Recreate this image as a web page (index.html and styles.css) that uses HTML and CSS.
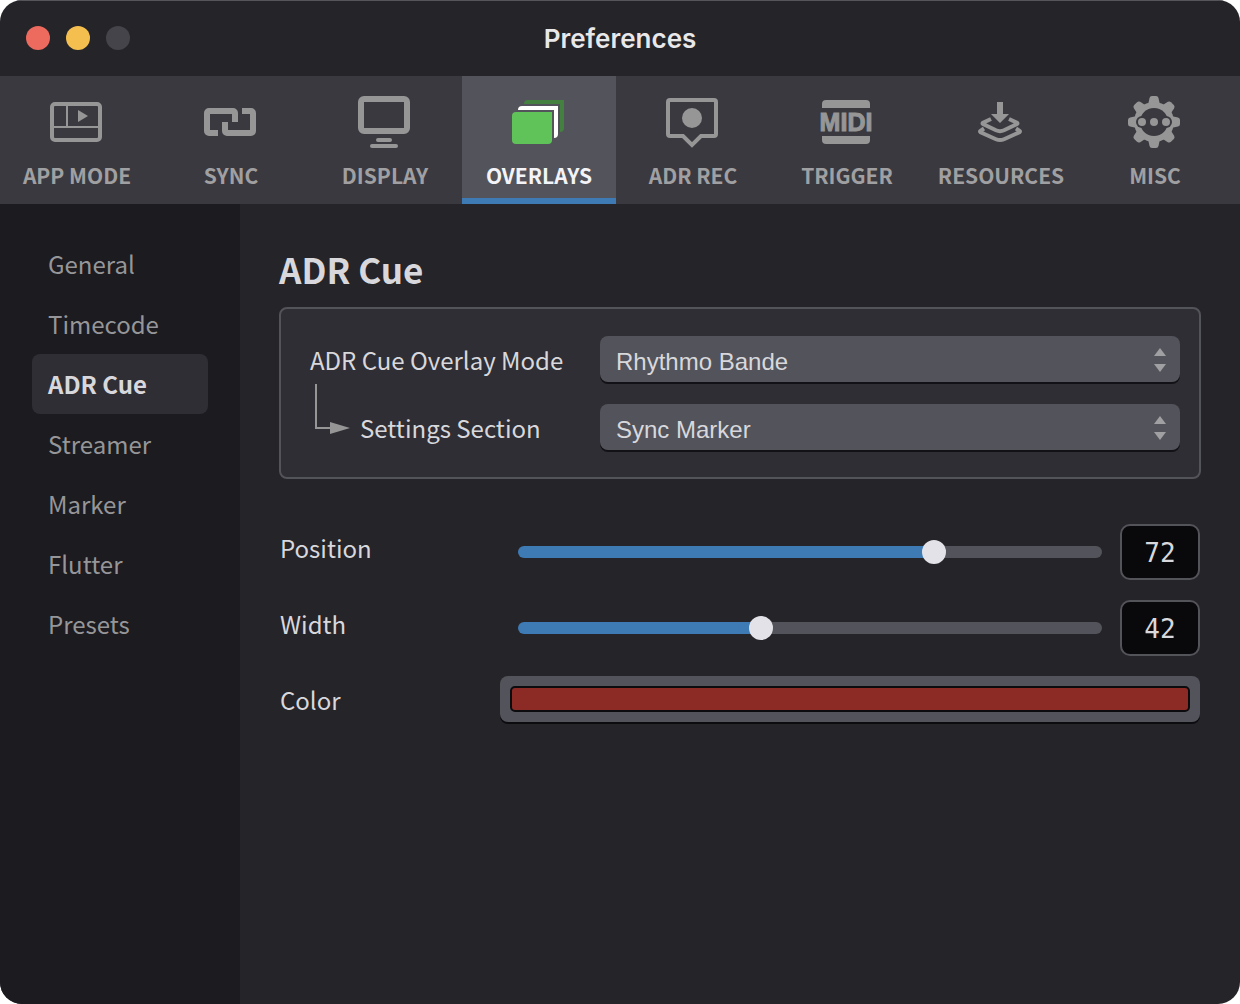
FILE: index.html
```html
<!DOCTYPE html>
<html lang="en">
<head>
<meta charset="UTF-8" />
<meta name="viewport" content="width=device-width, initial-scale=1" />
<title>Preferences</title>
<link rel="stylesheet" href="styles.css">
</head>
<body>

<div class="window">

  <header class="titlebar">
    <div class="traffic">
      <button type="button" class="dot close" aria-label="Close"></button>
      <button type="button" class="dot minimize" aria-label="Minimize"></button>
      <button type="button" class="dot zoom" aria-label="Zoom" disabled></button>
    </div>
    <h1>Preferences</h1>
  </header>

  <!-- Toolbar -->
  <nav class="toolbar">
    <button type="button" class="tab">
      <svg width="54" height="54" viewBox="0 0 54 54" fill="none" stroke="currentColor">
        <rect x="2" y="8" width="48" height="36" rx="3" stroke-width="4" />
        <path d="M17 9V31M3 31H49" stroke-width="2" />
        <path d="M28 14L38 20L28 26Z" fill="currentColor" stroke="none" />
      </svg>
      APP MODE
    </button>
    <button type="button" class="tab">
      <svg width="54" height="54" viewBox="0 0 54 54" fill="none" stroke="currentColor" stroke-width="6">
        <path d="M14 37H5a2 2 0 0 1-2-2V17a2 2 0 0 1 2-2H29a2 2 0 0 1 2 2V26" />
        <path d="M38 15H47a2 2 0 0 1 2 2V35a2 2 0 0 1-2 2H23a2 2 0 0 1-2-2V26" />
      </svg>
      SYNC
    </button>
    <button type="button" class="tab">
      <svg width="54" height="54" viewBox="0 0 54 54" fill="currentColor">
        <rect x="3" y="3" width="46" height="32" rx="3" fill="none" stroke="currentColor" stroke-width="6" />
        <rect x="18" y="42" width="16" height="4" rx="2" />
        <rect x="12" y="48" width="28" height="4" rx="2" />
      </svg>
      DISPLAY
    </button>
    <button type="button" class="tab active">
      <svg width="54" height="54" viewBox="0 0 54 54">
        <path d="M12 8q0-4 4-4H52V32q0 4-4 4V8Z" fill="#44803f" />
        <path d="M6 14q0-4 4-4H46V38q0 4-4 4V14Z" fill="#fff" />
        <path d="M4 16H40V44a4 4 0 0 1-4 4H4a4 4 0 0 1-4-4V20a4 4 0 0 1 4-4Z" fill="#5fc35a" />
      </svg>
      OVERLAYS
    </button>
    <button type="button" class="tab">
      <svg width="54" height="54" viewBox="0 0 54 54" fill="none" stroke="currentColor" stroke-width="4">
        <path d="M4 4H48a2 2 0 0 1 2 2V38a2 2 0 0 1-2 2H35L26 49L17 40H4a2 2 0 0 1-2-2V6a2 2 0 0 1 2-2Z" />
        <circle cx="26" cy="22" r="10" fill="currentColor" stroke="none" />
      </svg>
      ADR REC
    </button>
    <button type="button" class="tab">
      <svg width="54" height="54" viewBox="0 0 54 54" fill="currentColor">
        <path d="M2 12V8a4 4 0 0 1 4-4H46a4 4 0 0 1 4 4V12Z" />
        <text class="midi" x="26" y="35" text-anchor="middle">MIDI</text>
        <path d="M2 40H50V44a4 4 0 0 1-4 4H6a4 4 0 0 1-4-4Z" />
      </svg>
      TRIGGER
    </button>
    <button type="button" class="tab">
      <svg width="54" height="54" viewBox="0 0 54 54" fill="none" stroke="currentColor" stroke-width="4">
        <path d="M17 23L9 26.8q-1 .6 0 1.2L22 34.3q4 1.8 8 0L43 28q1-.6 0-1.2L35 23" />
        <path d="M10 32.5L6.5 34.8q-1 .8 0 1.4L22 43.2q4 1.8 8 0L45.5 36.2q1-.6 0-1.4L42 32.5" />
        <path d="M23 6H29V18H35L26 27L17 18H23Z" fill="currentColor" stroke="none" />
      </svg>
      RESOURCES
    </button>
    <button type="button" class="tab">
      <svg width="54" height="54" viewBox="0 0 54 54" fill="currentColor">
        <defs>
          <path id="tooth" d="M20 9L21.5 2Q22 0 24 0H28Q30 0 30.5 2L32 9Z" />
        </defs>
        <circle cx="26" cy="26" r="20" />
        <use href="#tooth" />
        <use href="#tooth" transform="rotate(45 26 26)" />
        <use href="#tooth" transform="rotate(90 26 26)" />
        <use href="#tooth" transform="rotate(135 26 26)" />
        <use href="#tooth" transform="rotate(180 26 26)" />
        <use href="#tooth" transform="rotate(225 26 26)" />
        <use href="#tooth" transform="rotate(270 26 26)" />
        <use href="#tooth" transform="rotate(315 26 26)" />
        <g class="gear-hole">
          <circle cx="26" cy="26" r="14" />
          <circle cx="14" cy="26" r="6" />
          <circle cx="38" cy="26" r="6" />
        </g>
        <circle cx="14" cy="26" r="4" />
        <circle cx="26" cy="26" r="4" />
        <circle cx="38" cy="26" r="4" />
      </svg>
      MISC
    </button>
  </nav>

  <div class="content">

    <nav class="sidebar">
      <a href="#general">General</a>
      <a href="#timecode">Timecode</a>
      <a href="#adr-cue" class="active">ADR Cue</a>
      <a href="#streamer">Streamer</a>
      <a href="#marker">Marker</a>
      <a href="#flutter">Flutter</a>
      <a href="#presets">Presets</a>
    </nav>

    <main class="main">
      <h2>ADR Cue</h2>

      <section class="panel">
        <label for="overlayMode">ADR Cue Overlay Mode</label>
        <div class="select">
          <select id="overlayMode">
            <option>Rhythmo Bande</option>
          </select>
          <svg width="12" height="26" viewBox="0 0 12 26" fill="currentColor">
            <path d="M6 2L12 10H0ZM0 18H12L6 26Z" />
          </svg>
        </div>

        <label for="settingsSection" class="nested">
          <svg width="36" height="50" viewBox="0 0 36 50">
            <path d="M2 0V44H18" fill="none" stroke="currentColor" stroke-width="2" />
            <path d="M16 38L36 44L16 50Z" fill="currentColor" />
          </svg>
          Settings Section
        </label>
        <div class="select">
          <select id="settingsSection">
            <option>Sync Marker</option>
          </select>
          <svg width="12" height="26" viewBox="0 0 12 26" fill="currentColor">
            <path d="M6 2L12 10H0ZM0 18H12L6 26Z" />
          </svg>
        </div>
      </section>

      <section class="settings">
        <div class="row">
          <label for="position">Position</label>
          <div class="range">
            <div class="track" style="--value: 72">
              <input type="range" id="position" min="0" max="100" value="72" />
            </div>
            <input type="text" class="value" inputmode="numeric" aria-label="Position value" value="72" />
          </div>
        </div>
        <div class="row">
          <label for="width">Width</label>
          <div class="range">
            <div class="track" style="--value: 42">
              <input type="range" id="width" min="0" max="100" value="42" />
            </div>
            <input type="text" class="value" inputmode="numeric" aria-label="Width value" value="42" />
          </div>
        </div>
        <div class="row">
          <label for="color">Color</label>
          <input type="color" id="color" value="#8c2b25" />
        </div>
      </section>
    </main>

  </div>
</div>

<script>
  // Keep each slider and its number box in step
  document.querySelectorAll('.range').forEach((range) => {
    const track = range.querySelector('.track');
    const slider = range.querySelector('input[type="range"]');
    const box = range.querySelector('.value');

    slider.addEventListener('input', () => {
      box.value = slider.value;
      track.style.setProperty('--value', slider.value);
    });

    box.addEventListener('change', () => {
      slider.value = box.value;
      box.value = slider.value;
      track.style.setProperty('--value', slider.value);
    });
  });
</script>

</body>
</html>
```

FILE: styles.css
```css
* {
  box-sizing: border-box;
}

body {
  margin: 0;
  background-color: #fff;
  color: #d8d8dc;
  font-family: "Noto Sans CJK SC", "Noto Sans", sans-serif;
  font-size: 24px;
}

button,
input,
select {
  margin: 0;
  border: none;
  font: inherit;
  color: inherit;
}

.window {
  display: flex;
  flex-direction: column;
  min-height: 100vh;
  border-radius: 22px;
  background-color: #252429;
  overflow: hidden;
}

/* Title bar */
.titlebar {
  display: grid;
  grid-template-columns: 1fr auto 1fr;
  align-items: center;
  height: 76px;
  padding: 0 26px;
  box-shadow: inset 0 1px #55555a;
}

.titlebar h1 {
  margin: 0;
  font-family: Inter, sans-serif;
  font-size: 26px;
  font-weight: 600;
  color: #e8e8ea;
}

.traffic {
  display: flex;
  gap: 16px;
}

.dot {
  width: 24px;
  height: 24px;
  padding: 0;
  border-radius: 50%;
}

.close {
  background-color: #ec6a5e;
}

.minimize {
  background-color: #f4bf4f;
}

.zoom {
  background-color: #45444a;
}

/* Toolbar */
.toolbar {
  display: grid;
  grid-template-columns: repeat(8, 1fr);
  padding-right: 8px;
  background-color: #3a393f;
}

.tab {
  display: flex;
  flex-direction: column;
  align-items: center;
  gap: 12px;
  height: 128px;
  padding: 20px 0 0;
  background: none;
  font-size: 21px;
  font-weight: bold;
  line-height: 26px;
  white-space: nowrap;
  color: #a0a0a2;
  cursor: pointer;
}

.tab svg {
  color: #969696;
}

.tab.active {
  background-color: #53535b;
  box-shadow: inset 0 -6px #3e7ab4;
  color: #f4f4f8;
}

.midi {
  font-family: "Liberation Sans", Arial, sans-serif;
  font-size: 25px;
  font-weight: bold;
  stroke: currentColor;
  stroke-width: 1px;
}

.gear-hole {
  fill: #3a393f;
}

.content {
  display: flex;
  flex: 1;
}

/* Sidebar */
.sidebar {
  flex: 0 0 240px;
  padding: 30px 32px;
  background-color: #1c1b20;
}

.sidebar a {
  display: block;
  padding: 0 16px;
  border-radius: 8px;
  line-height: 60px;
  color: #969698;
  text-decoration: none;
}

.sidebar a.active {
  background-color: #2f2e34;
  font-weight: bold;
  color: #d8d8dc;
}

/* Main pane */
.main {
  flex: 1;
  min-width: 0;
  padding: 43px 39px;
}

.main h2 {
  margin: 0 0 16px;
  font-size: 35px;
  line-height: 44px;
}

.main label {
  padding-top: 2px;
  line-height: 44px;
  white-space: nowrap;
}

.panel {
  display: grid;
  grid-template-columns: 290px 1fr;
  row-gap: 22px;
  padding: 27px 19px 27px 29px;
  border: 2px solid #53535a;
  border-radius: 8px;
  background-color: #2f2e34;
}

.nested {
  display: flex;
  align-items: flex-start;
  gap: 10px;
  padding-left: 4px;
}

.nested svg {
  margin-top: -22px;
  color: #969696;
}

.select {
  display: grid;
  align-items: center;
}

.select select,
.select svg {
  grid-area: 1 / 1;
}

.select svg {
  justify-self: end;
  margin-right: 14px;
  color: #a0a0a2;
  pointer-events: none;
}

.select select {
  appearance: none;
  width: 100%;
  height: 46px;
  padding: 4px 40px 0 16px;
  border-radius: 8px;
  background-color: #53535b;
  box-shadow: 0 2px #121116;
  font-family: "Liberation Sans", Arial, sans-serif;
  font-size: 24px;
}

.settings {
  display: grid;
  gap: 20px;
  padding: 45px 1px 0;
}

.row {
  display: grid;
  grid-template-columns: 220px 1fr;
  align-items: start;
}

.range {
  display: flex;
  align-items: center;
  gap: 18px;
  padding-left: 18px;
}

/* The thumb centre travels from the left end to 6px before the right end */
.track {
  flex: 1;
  display: flex;
  align-items: center;
  height: 12px;
  border-radius: 6px;
  background: linear-gradient(#3e7ab4, #3e7ab4) no-repeat #53535b;
  background-size: calc((100% - 6px) * var(--value) / 100) 100%;
}

.track input {
  appearance: none;
  flex: none;
  width: calc(100% + 18px);
  height: 24px;
  margin: 0 -12px;
  background: none;
}

.track input::-webkit-slider-thumb {
  appearance: none;
  width: 24px;
  height: 24px;
  border-radius: 50%;
  background-color: #e2e2e8;
}

.value {
  width: 80px;
  height: 56px;
  padding: 2px 0 0;
  border: 2px solid #53535a;
  border-radius: 10px;
  background-color: #09090b;
  font-family: "DejaVu Sans Mono", monospace;
  font-size: 26px;
  text-align: center;
}

input[type="color"] {
  appearance: none;
  width: 100%;
  height: 46px;
  padding: 10px;
  border-radius: 8px;
  background-color: #53535b;
  box-shadow: 0 2px #0c0c0f;
}

input[type="color"]::-webkit-color-swatch-wrapper {
  padding: 0;
}

input[type="color"]::-webkit-color-swatch {
  border: 2px solid #0c0c0f;
  border-radius: 5px;
}
```
